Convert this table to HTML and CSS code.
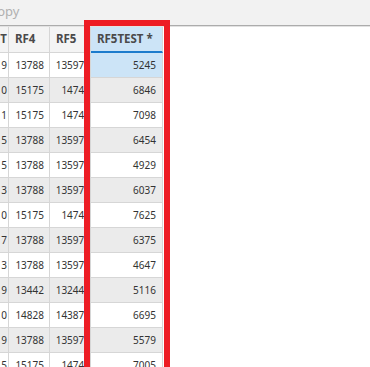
FILE: index.html
```html
<!DOCTYPE html>
<html>
<head>
<meta charset="utf-8">
<link rel="stylesheet" href="styles.css">
</head>
<body>
<div class="page">
  <div class="toolbar"><span class="tool-label">Copy</span></div>
  <div class="grid">
    <div class="row head">
      <div class="cell c0">COUNT</div>
      <div class="cell c1">RF4</div>
      <div class="cell c2">RF5</div>
      <div class="cell c3 sel-head">RF5TEST *</div>
    </div>
    <div class="row"><div class="cell c0">9</div><div class="cell c1">13788</div><div class="cell c2">135975</div><div class="cell c3 sel">5245</div></div>
    <div class="row alt"><div class="cell c0">0</div><div class="cell c1">15175</div><div class="cell c2">14745</div><div class="cell c3">6846</div></div>
    <div class="row"><div class="cell c0">1</div><div class="cell c1">15175</div><div class="cell c2">14745</div><div class="cell c3">7098</div></div>
    <div class="row alt"><div class="cell c0">5</div><div class="cell c1">13788</div><div class="cell c2">135975</div><div class="cell c3">6454</div></div>
    <div class="row"><div class="cell c0">5</div><div class="cell c1">13788</div><div class="cell c2">135975</div><div class="cell c3">4929</div></div>
    <div class="row alt"><div class="cell c0">3</div><div class="cell c1">13788</div><div class="cell c2">135975</div><div class="cell c3">6037</div></div>
    <div class="row"><div class="cell c0">0</div><div class="cell c1">15175</div><div class="cell c2">14745</div><div class="cell c3">7625</div></div>
    <div class="row alt"><div class="cell c0">7</div><div class="cell c1">13788</div><div class="cell c2">135975</div><div class="cell c3">6375</div></div>
    <div class="row"><div class="cell c0">3</div><div class="cell c1">13788</div><div class="cell c2">135975</div><div class="cell c3">4647</div></div>
    <div class="row alt"><div class="cell c0">9</div><div class="cell c1">13442</div><div class="cell c2">132445</div><div class="cell c3">5116</div></div>
    <div class="row"><div class="cell c0">0</div><div class="cell c1">14828</div><div class="cell c2">143875</div><div class="cell c3">6695</div></div>
    <div class="row alt"><div class="cell c0">9</div><div class="cell c1">13788</div><div class="cell c2">135975</div><div class="cell c3">5579</div></div>
    <div class="row"><div class="cell c0">5</div><div class="cell c1">15175</div><div class="cell c2">14745</div><div class="cell c3">7005</div></div>
  </div>
  <div class="highlight"></div>
</div>
</body>
</html>
```

FILE: styles.css
```css
html, body {
  margin: 0;
  padding: 0;
  background: #ffffff;
}
.page {
  position: relative;
  width: 370px;
  height: 367px;
  overflow: hidden;
  font-family: "Noto Sans", "Open Sans", sans-serif;
  color: #333333;
}
.toolbar {
  height: 25px;
  background: #f2f2f2;
  border-bottom: 1px solid #acacac;
  box-shadow: 0 1px 0 #e2e2e2;
  display: flex;
  align-items: flex-start;
  overflow: hidden;
  margin-bottom: 1px;
}
.tool-label {
  margin-left: -11px;
  margin-top: 2px;
  font-size: 13px;
  line-height: 18px;
  color: #b0b0b0;
  white-space: nowrap;
}
.grid {
  display: flex;
  flex-direction: column;
  align-items: flex-start;
}
.row {
  display: grid;
  grid-template-columns: 9px 41px 41px 72px;
  height: 25px;
  background: #ffffff;
}
.row.alt {
  background: #ebebeb;
}
.cell {
  box-sizing: border-box;
  border-right: 1px solid #d6d6d6;
  border-bottom: 1px solid #d6d6d6;
  font-size: 10px;
  line-height: 24px;
  text-align: right;
  white-space: nowrap;
  overflow: hidden;
  padding-right: 5px;
}
.c0 {
  padding-right: 1px;
  direction: rtl;
}
.c2 {
  padding-right: 0;
}
.c3 {
  padding-right: 6px;
}
.sel {
  background: #cce4f7;
}
.row.head {
  height: 26px;
  background: #f4f4f4;
}
.row.head .cell {
  font-size: 11.5px;
  font-weight: 700;
  color: #4a4a4a;
  text-align: left;
  padding-left: 6px;
  line-height: 24px;
}
.row.head .c0 {
  padding-left: 0;
  text-align: right;
}
.row.head .sel-head {
  background: #cce4f7;
  border-bottom: 2px solid #1c7bcc;
}
.highlight {
  position: absolute;
  left: 84px;
  top: 20px;
  width: 86px;
  height: 360px;
  box-sizing: border-box;
  border: 6px solid #ed1c24;
}
```
